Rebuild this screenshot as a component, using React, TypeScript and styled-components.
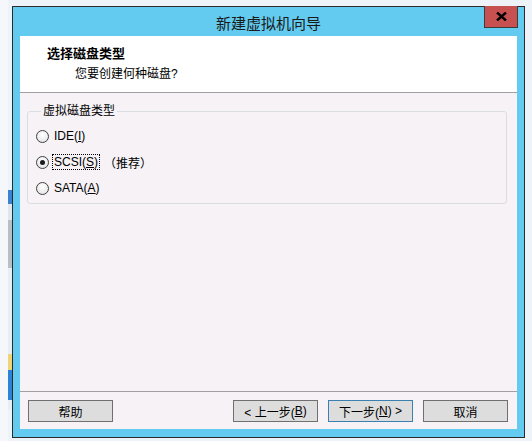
import React from "react"
import styled, { createGlobalStyle } from "styled-components"

const GlobalStyle = createGlobalStyle`
  html, body {
    margin: 0;
    padding: 0;
    background: #eef2f9;
  }
  * {
    box-sizing: border-box;
  }
`

const FONT = `"Liberation Sans", "Noto Sans CJK SC", sans-serif`

const Desktop = styled.div`
  position: relative;
  width: 532px;
  height: 441px;
  overflow: hidden;
  background: linear-gradient(to right, #f5f7fb 0 8px, #eef2f9 8px);
  padding: 6px 0 0 12px;
  font-family: ${FONT};
`

// part of another window peeking out at the left edge
const BehindStrip = styled.div`
  position: absolute;
  left: 8px;
  top: 190px;
  width: 4px;
  height: 220px;
  background: linear-gradient(
    to bottom,
    #3b82d0 0 14px,
    #dfe6ee 14px 30px,
    #b9bfc6 30px 78px,
    #e9eef5 78px 164px,
    #f0d47a 164px 180px,
    #2d83d6 180px 210px,
    #e9eef5 210px
  );
`

const Window = styled.div`
  position: relative;
  width: 513px;
  height: 432px;
  border: 1px solid #2b2b2b;
  background: #63cbef;
  display: flex;
  flex-direction: column;
`

const TitleBar = styled.div`
  height: 29px;
  display: flex;
  align-items: center;
  justify-content: center;
  font-size: 15px;
  color: #1a1a1a;
  padding-top: 1px;
`

const CloseButton = styled.div`
  position: absolute;
  top: -1px;
  right: 6px;
  width: 34px;
  height: 22px;
  background: #c75050;
  border: 1px solid #3c3c3c;
  border-top: none;
  display: flex;
  align-items: center;
  justify-content: center;
`

const Client = styled.div`
  flex: 1;
  margin: 0 7px 8px;
  display: flex;
  flex-direction: column;
  background: #f6f2f6;
`

const Header = styled.div`
  height: 57px;
  background: #ffffff;
  padding: 10px 0 0 27px;
  border-bottom: 1px solid #a0a0a0;
`

const HeaderTitle = styled.div`
  font-size: 13px;
  line-height: 16px;
  font-weight: bold;
  color: #000;
`

const HeaderSub = styled.div`
  font-size: 12px;
  line-height: 16px;
  margin: 4px 0 0 28px;
  color: #000;
`

const Body = styled.div`
  flex: 1;
  padding: 10px 10px 0 7px;
`

const Group = styled.fieldset`
  margin: 0;
  padding: 4px 0 2px 8px;
  border: 1px solid #d9dde2;
  border-radius: 3px;
`

const Legend = styled.legend`
  margin-left: 5px;
  padding: 0 2px;
  font-size: 12px;
  line-height: 16px;
  color: #000;
`

const OptionRow = styled.div`
  height: 26px;
  display: flex;
  align-items: center;
  font-size: 12px;
  color: #000;
`

const RadioCircle = styled.span<{ $checked?: boolean }>`
  width: 13px;
  height: 13px;
  border-radius: 50%;
  border: 1px solid #3f3f3f;
  background: radial-gradient(circle at 50% 35%, #ffffff, #e0e0e0);
  display: flex;
  align-items: center;
  justify-content: center;
  margin-right: 3px;

  &::after {
    content: "";
    width: 5px;
    height: 5px;
    border-radius: 50%;
    background: #1a1a1a;
    display: ${p => (p.$checked ? "block" : "none")};
  }
`

const OptionLabel = styled.span<{ $focused?: boolean }>`
  line-height: 14px;
  padding: 0 1px;
  border: 1px dotted ${p => (p.$focused ? "#000" : "transparent")};
`

const Note = styled.span`
  margin-left: 4px;
`

const Mnemonic = styled.span`
  text-decoration: underline;
  text-underline-offset: 1px;
`

const Footer = styled.div`
  height: 38px;
  border-top: 1px solid #a0a0a0;
  display: flex;
  align-items: flex-start;
  padding: 8px 9px 0 8px;
`

const ButtonGroup = styled.div`
  margin-left: auto;
  display: flex;
  gap: 10px;
`

const Button = styled.div<{ $default?: boolean }>`
  width: 85px;
  height: 22px;
  background: #dddddd;
  border: 1px solid ${p => (p.$default ? "#3c7fb1" : "#707070")};
  display: flex;
  align-items: center;
  justify-content: center;
  font-size: 12px;
  color: #000;
  white-space: pre;
`

const CloseGlyph = () => (
  <svg width="11" height="9" viewBox="0 0 11 9">
    <path d="M1 0.5 L10 8.5 M10 0.5 L1 8.5" stroke="#000" strokeWidth="2.4" />
  </svg>
)

export default function App() {
  return (
    <>
      <GlobalStyle />
      <Desktop>
        <BehindStrip />
        <Window>
          <TitleBar>新建虚拟机向导</TitleBar>
          <CloseButton>
            <CloseGlyph />
          </CloseButton>
          <Client>
            <Header>
              <HeaderTitle>选择磁盘类型</HeaderTitle>
              <HeaderSub>您要创建何种磁盘?</HeaderSub>
            </Header>
            <Body>
              <Group>
                <Legend>虚拟磁盘类型</Legend>
                <OptionRow>
                  <RadioCircle />
                  <OptionLabel>
                    IDE(<Mnemonic>I</Mnemonic>)
                  </OptionLabel>
                </OptionRow>
                <OptionRow>
                  <RadioCircle $checked />
                  <OptionLabel $focused>
                    SCSI(<Mnemonic>S</Mnemonic>)
                  </OptionLabel>
                  <Note>（推荐）</Note>
                </OptionRow>
                <OptionRow>
                  <RadioCircle />
                  <OptionLabel>
                    SATA(<Mnemonic>A</Mnemonic>)
                  </OptionLabel>
                </OptionRow>
              </Group>
            </Body>
            <Footer>
              <Button>帮助</Button>
              <ButtonGroup>
                <Button>
                  {"< 上一步("}
                  <Mnemonic>B</Mnemonic>)
                </Button>
                <Button $default>
                  下一步(<Mnemonic>N</Mnemonic>
                  {") >"}
                </Button>
                <Button>取消</Button>
              </ButtonGroup>
            </Footer>
          </Client>
        </Window>
      </Desktop>
    </>
  )
}
